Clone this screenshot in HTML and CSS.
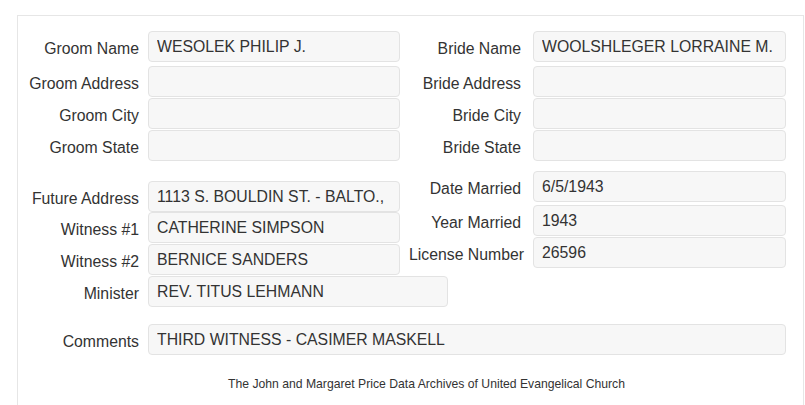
FILE: index.html
```html
<!DOCTYPE html>
<html lang="en">
<head>
    <meta charset="UTF-8">
    <meta name="viewport" content="width=device-width, initial-scale=1.0">
    <title>Marriage Record</title>
    <link rel="stylesheet" href="styles.css">
</head>
<body>

<div class="record">

    <div class="section names">
        <div class="col">
            <div class="field first">
                <label>Groom Name</label>
                <input type="text" readonly value="WESOLEK PHILIP J.">
            </div>
            <div class="field">
                <label>Groom Address</label>
                <input type="text" readonly value="">
            </div>
            <div class="field">
                <label>Groom City</label>
                <input type="text" readonly value="">
            </div>
            <div class="field">
                <label>Groom State</label>
                <input type="text" readonly value="">
            </div>
        </div>
        <div class="col right">
            <div class="field first">
                <label>Bride Name</label>
                <input type="text" readonly value="WOOLSHLEGER LORRAINE M.">
            </div>
            <div class="field">
                <label>Bride Address</label>
                <input type="text" readonly value="">
            </div>
            <div class="field">
                <label>Bride City</label>
                <input type="text" readonly value="">
            </div>
            <div class="field">
                <label>Bride State</label>
                <input type="text" readonly value="">
            </div>
        </div>
    </div>

    <div class="section details">
        <div class="col lower">
            <div class="field tight">
                <label>Future Address</label>
                <input type="text" readonly value="1113 S. BOULDIN ST. - BALTO.,">
            </div>
            <div class="field">
                <label>Witness #1</label>
                <input type="text" readonly value="CATHERINE SIMPSON">
            </div>
            <div class="field">
                <label>Witness #2</label>
                <input type="text" readonly value="BERNICE SANDERS">
            </div>
            <div class="field">
                <label>Minister</label>
                <input type="text" class="wide" readonly value="REV. TITUS LEHMANN">
            </div>
        </div>
        <div class="col right">
            <div class="field first">
                <label>Date Married</label>
                <input type="text" readonly value="6/5/1943">
            </div>
            <div class="field">
                <label>Year Married</label>
                <input type="text" readonly value="1943">
            </div>
            <div class="field">
                <label class="long">License Number</label>
                <input type="text" readonly value="26596">
            </div>
        </div>
    </div>

    <!-- Bemerkungen -->
    <div class="field comments">
        <label>Comments</label>
        <input type="text" class="full" readonly value="THIRD WITNESS - CASIMER MASKELL">
    </div>

    <p class="footer">The John and Margaret Price Data Archives of United Evangelical Church</p>

</div>

</body>
</html>
```

FILE: styles.css
```css
body {
    font-family: "Liberation Sans", Arial, sans-serif;
    margin: 0;
    padding: 0;
    background-color: white;
    color: #333;
}

.record {
    margin: 15px 0 0 17px;
    width: 787px;
    min-height: 420px;
    border: 1px solid #e6e6e6;
    border-bottom: none;
    padding-top: 15px;
    box-sizing: border-box;
}

.section {
    display: flex;
}

.col {
    width: 382px;
    flex-shrink: 0;
}

.col.right {
    width: 400px;
}

.col.lower {
    padding-top: 10px;
}

.details {
    margin-top: 9px;
}

.field {
    display: flex;
    align-items: center;
    margin-bottom: 1px;
}

.field.first {
    margin-bottom: 4px;
}

.details .field.first {
    margin-bottom: 3px;
}

.field.tight {
    margin-bottom: 0;
}

.field label {
    flex-shrink: 0;
    width: 121px;
    margin-right: 9px;
    text-align: right;
    font-size: 15.8px;
    white-space: nowrap;
    padding-top: 5px;
}

.col.right label {
    margin-right: 12px;
}

.col.right label.long {
    margin-right: 9px;
    margin-left: 3px;
}

.field input {
    flex-shrink: 0;
    font-family: "Liberation Sans", Arial, sans-serif;
    font-size: 15.8px;
    color: #333;
    width: 252px;
    height: 31px;
    box-sizing: border-box;
    padding: 0 8px;
    margin: 0;
    background-color: #f7f7f7;
    border: 1px solid #e3e3e3;
    border-radius: 4px;
    outline: none;
}

.col.right input {
    width: 253px;
}

.field input.wide {
    width: 300px;
}

.comments {
    margin-top: 16px;
}

.field input.full {
    width: 638px;
}

.footer {
    margin: 22px 0 0;
    padding-left: 32px;
    text-align: center;
    font-size: 12.2px;
}
```
